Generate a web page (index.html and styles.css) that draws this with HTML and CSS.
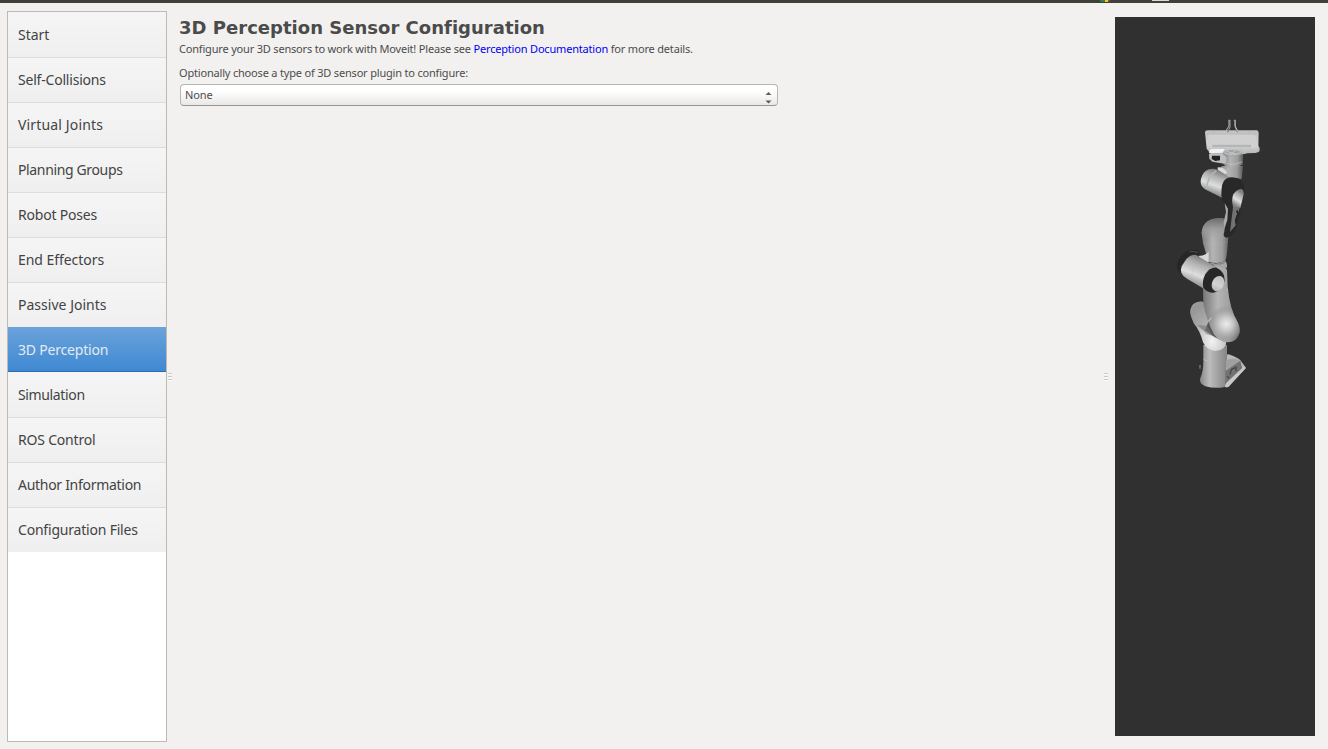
FILE: index.html
```html
<!DOCTYPE html>
<html lang="en">
<head>
<meta charset="utf-8">
<title>3D Perception Sensor Configuration</title>
<link rel="stylesheet" href="styles.css">
</head>
<body>
<div class="topbar"><i class="browser-icon"></i><i class="window-icon"></i></div>
<div class="window">
  <nav class="sidebar">
    <div class="item"><span>Start</span></div>
    <div class="item snug"><span>Self-Collisions</span></div>
    <div class="item wide"><span>Virtual Joints</span></div>
    <div class="item tight"><span>Planning Groups</span></div>
    <div class="item snug"><span>Robot Poses</span></div>
    <div class="item"><span>End Effectors</span></div>
    <div class="item roomy"><span>Passive Joints</span></div>
    <div class="item active snug"><span>3D Perception</span></div>
    <div class="item tight"><span>Simulation</span></div>
    <div class="item snug"><span>ROS Control</span></div>
    <div class="item tighter"><span>Author Information</span></div>
    <div class="item snug"><span>Configuration Files</span></div>
  </nav>
  <div class="splitter"><i></i><i></i><i></i></div>
  <main class="content">
    <h1>3D Perception Sensor Configuration</h1>
    <p class="intro">Configure your 3D sensors to work with Moveit! Please see <a>Perception Documentation</a> for more details.</p>
    <p class="prompt">Optionally choose a type of 3D sensor plugin to configure:</p>
    <div class="combo"><span>None</span>
      <svg width="7" height="13" viewBox="0 0 7 13"><path d="M0.5 4 3.5 1 6.5 4ZM.5 9.5 3.5 12.5 6.5 9.5Z" fill="#5c5c5c"/></svg>
    </div>
  </main>
  <div class="splitter right"><i></i><i></i><i></i></div>
  <aside class="viewport">
    <svg width="200" height="719" viewBox="0 0 200 719">
      <defs>
        <linearGradient id="tube"><stop offset="0" stop-color="#7c7c7c"/><stop offset=".4" stop-color="#b4b4b4"/><stop offset=".75" stop-color="#9c9c9c"/><stop offset="1" stop-color="#5c5c5c"/></linearGradient>
        <linearGradient id="base"><stop offset="0" stop-color="#858585"/><stop offset=".35" stop-color="#bcbcbc"/><stop offset="1" stop-color="#858585"/></linearGradient>
        <linearGradient id="shoulder" x1="0" y1="0" x2="0" y2="1"><stop offset="0" stop-color="#6a6a6a"/><stop offset=".5" stop-color="#9a9a9a" stop-opacity=".8"/><stop offset="1" stop-color="#a4a4a4" stop-opacity="0"/></linearGradient>
        <linearGradient id="barrel" x1=".65" y1=".1" x2=".35" y2=".9"><stop offset="0" stop-color="#808080"/><stop offset=".25" stop-color="#b0b0b0"/><stop offset=".6" stop-color="#dedede"/><stop offset="1" stop-color="#808080"/></linearGradient>
        <linearGradient id="hand" x1="0" y1="0" x2="0" y2="1"><stop offset="0" stop-color="#c0c0c0"/><stop offset=".6" stop-color="#d2d2d2"/><stop offset="1" stop-color="#b3b3b3"/></linearGradient>
        <linearGradient id="limb"><stop offset="0" stop-color="#777"/><stop offset=".4" stop-color="#b5b5b5"/><stop offset=".7" stop-color="#a2a2a2"/><stop offset="1" stop-color="#606060"/></linearGradient>
        <radialGradient id="elbow" gradientUnits="userSpaceOnUse" cx="184" cy="642" r="56"><stop offset="0" stop-color="#ededed"/><stop offset=".35" stop-color="#d0d0d0" stop-opacity=".9"/><stop offset=".75" stop-color="#a0a0a0" stop-opacity=".6"/><stop offset="1" stop-color="#888" stop-opacity="0"/></radialGradient>
        <radialGradient id="bowl" cx=".6" cy=".8" r=".75"><stop offset="0" stop-color="#f2f2f2"/><stop offset=".4" stop-color="#d0d0d0"/><stop offset="1" stop-color="#858585"/></radialGradient>
      </defs>
      <g transform="translate(50 93) scale(.33333)">
        <!-- base -->
        <path d="M184 737 Q187 731 195 734 Q220 743 226 751 L243 773 L191 830 Q185 834 179 831 L170 780Z" fill="#b9b9b9"/>
        <path d="M115 705 H186 V750 L179 831 Q151 837 121 829 Q103 821 105 807 Q115 785 115 757Z" fill="url(#base)"/>
        <path d="M182 752 Q205 740 227 753 Q216 760 185 780Z" fill="#a0a0a0"/>
        <path d="M181 783 226 752 232 776 180 825Z" fill="#727272"/>
        <path d="M184 818 236 770 242 775 190 830 180 830Z" fill="#c8c8c8"/>
        <path d="M195 794 200 778 213 772 213 784M187 799 193 805" fill="none" stroke="#484848" stroke-width="4"/>
        <path d="M105 765v11M115 746q6 7 12 6" stroke="#ccc" stroke-width="2" fill="none"/>
        <!-- lower joint -->
        <path d="M77 614 Q73 595 85 582 Q99 571 117 576 L136 642 L185 690 Q184 721 151 723 Q124 720 114 697 Q105 662 86 640Z" fill="url(#bowl)"/>
        <path d="M77 614 Q73 595 85 582 Q99 571 117 576 L132 628 L122 665 L103 654 Q80 635 77 614Z" fill="#a5a5a5" opacity=".65"/>
        <path d="M120 661 Q143 681 180 696 L142 652 135 623Z" fill="#555"/>
        <path d="M97 645 Q117 662 124 672 L144 678 126 647Z" fill="#777" opacity=".6"/>
        <!-- forearm -->
        <path id="forearm" d="M114 530 115 580 Q123 630 148 674 Q164 696 190 697 Q216 695 224 668 Q226 650 216 632 Q195 599 188 530 L186 480 Q172 455 148 465 L114 515Z" fill="url(#limb)"/>
        <path d="M114 530 115 580 Q123 630 148 674 Q164 696 190 697 Q216 695 224 668 Q226 650 216 632 Q195 599 188 530Z" fill="url(#elbow)"/>
        <path d="M130 635l9-12M185 540h3" stroke="#eee" stroke-width="2"/>
        <!-- upper arm -->
        <path d="M110 368 Q112 333 148 326 Q177 321 193 333 L189 391 Q186 442 181 452 Q161 465 130 455 L114 399Z" fill="url(#tube)"/>
        <path d="M110 367 Q113 333 148 326 Q177 321 193 333 L190 390 H112Z" fill="url(#shoulder)"/>
        <path d="M116 397q35 13 73-3" stroke="#d5d5d5" stroke-width="1" stroke-dasharray="2 5" fill="none"/>
        <path d="M100 438 Q121 437 131 425 L131 456 118 459Z" fill="#d8d8d8"/>
        <path d="M130 457q28 8 51-4 6 6 5 20l-30-3Z" fill="#a6a6a6"/>
        <path d="M147 461q18 4 32-3" fill="none" stroke="#666" stroke-width="2"/>
        <!-- elbow cylinder -->
        <path d="M47 489 Q31 478 38 457 Q51 423 81 420 Q100 419 104 430 L82 448Z" fill="#272727"/>
        <path d="M74 425q15-2 25 3" stroke="#666" stroke-width="2" fill="none"/>
        <path d="M64 447 Q75 434 92 434 L155 472 124 541 66 506 Q41 493 50 469Z" fill="url(#barrel)"/>
        <path d="M81 494q6-33 29-46" stroke="#aaa" stroke-width="1.5" stroke-dasharray="3 4" fill="none"/>
        <path d="M115 533 Q110 514 121 493 Q134 471 155 473 Q180 485 179 511 Q176 543 146 548 Q126 548 115 533Z" fill="#272727"/>
        <ellipse cx="159" cy="521" rx="18" ry="24" transform="rotate(24 159 521)" fill="url(#hand)"/>
        <!-- upper wrist -->
        <path d="M171 168 H234 L230 208 Q208 200 186 208L160 180Z" fill="url(#tube)"/>
        <path d="M158 172 Q176 170 187 188 L180 193 158 180Z" fill="#d9d9d9"/>
        <path d="M108 206 Q114 184 132 178 Q145 174 158 179 L198 205 Q174 220 171 263 L120 238 Q103 226 108 206Z" fill="url(#barrel)"/>
        <path d="M125 236q2-37 29-54" stroke="#aeb8b9" stroke-width="5" fill="none"/>
        <path d="M171 130H234V163Q215 177 181 169L171 157Z" fill="url(#tube)"/>
        <path d="M177 157q25 13 54-2" fill="none" stroke="#c5caca" stroke-width="2"/>
        <!-- dark wrist link -->
        <path d="M169 256 Q168 216 183 206 Q207 195 228 212 Q242 226 236 250 L227 300 214 350 Q207 380 184 383 Q172 380 178 365 L185 295 Q182 280 172 271Z" fill="#282828"/>
        <path d="M205 295 Q198 270 205 253 Q214 238 229 237 Q237 241 236 253 L226 295Z" fill="url(#barrel)"/>
        <path d="M179 280 189 296 187 330 178 357 176 336 183 306Z" fill="#aaa"/>
        <path d="M204 292 224 292 219 315 211 347 195 366Z" fill="#727272"/>
        <path d="M215 302q7 8 1 17q-5 10-3 21" stroke="#202020" stroke-width="5" fill="none"/>
        <!-- hand -->
        <path d="M271 105 Q286 107 284 119 Q285 128 270 128Z" fill="#bababa"/>
        <path d="M120 67 Q120 61 128 61 H275 Q280 61 281 68 L280 113 Q281 126 270 129 L247 130 Q230 136 218 129 H176 L170 134 H139 L125 116Z" fill="url(#hand)"/>
        <path d="M129 76 Q131 73 138 73 H266 Q274 76 274 85 V113 H137Z" fill="#d0d0d0"/>
        <path d="M141 104H258V112H142Z" fill="#b3b6b7"/>
        <path d="M125 72H276M145 63v7M254 63v7" stroke="#b0b3b3" stroke-width="2"/>
        <path d="M132 130 Q132 118 141 117 H179 L173 128Z" fill="#f1f1f1"/>
        <path d="M132 132H174L184 142V155L178 161 142 155 133 146Z" fill="#bcc0c0"/>
        <path d="M141 137H165V151L151 153 140 147Z" fill="#222"/>
        <ellipse cx="203" cy="129" rx="29" ry="9" fill="#a0a4a5"/>
        <path d="M178 128q24 13 51-1M185 124l29 9M192 134l20-12" stroke="#d2d5d5" stroke-width="2" fill="none"/>
        <path d="M190 31H195V51L188 67M206 31H211V51L218 67" fill="none" stroke="#7e8587" stroke-width="4"/>
        <path d="M192 48 181 65M210 48 219 65M192 31v17M210 31v17" fill="none" stroke="#b6bdbf" stroke-width="3"/>
      </g>
    </svg>
  </aside>
</div>
</body>
</html>
```
FILE: styles.css
```css
* { box-sizing: border-box; }
body { margin: 0; width: 1328px; height: 749px; overflow: hidden; background: #f2f1f0; color: #4c4c4c; font-family: "Noto Sans", sans-serif; }
.topbar { height: 3px; background: #403f3a; display: flex; padding-left: 1100px; }
.browser-icon { width: 10px; height: 2px; background: linear-gradient(90deg, #2b8247 0 45%, #f4c62c 45% 75%, #68622e 75%); border-radius: 0 0 5px 5px; }
.window-icon { width: 17px; height: 1px; margin-left: 42px; background: #dfdcd2; }
.window { height: 746px; display: flex; padding: 8px 13px 7px 7px; }
.sidebar { width: 160px; height: 731px; border: 1px solid #bdbab6; background: #fff; flex: none; }
.item { height: 45px; display: flex; align-items: center; padding: 0 0 1px 10px; font-size: 14px; letter-spacing: -.05px; color: #434343; white-space: nowrap; background: linear-gradient(#f5f5f5, #efefef); border-top: 1px solid #dcdcdc; }
.item.snug { letter-spacing: -.2px; }
.item.tight { letter-spacing: -.36px; }
.item.tighter { letter-spacing: -.29px; }
.item.roomy { letter-spacing: .02px; }
.item.wide { letter-spacing: .15px; }
.item:first-child { border-top-color: #f5f5f5; }
.item.active { color: #e4eaf0; background: linear-gradient(#6aa2db, #3f89d2); border-top-color: #6ba2da; border-bottom: 1px solid #2c6bad; padding-bottom: 0; }
.active + .item { border-top-color: #f5f5f5; }
.splitter { width: 6px; flex: none; display: flex; flex-direction: column; gap: 2px; padding: 362px 0 0 1px; }
.splitter i { width: 4px; height: 1px; background: #cbc9c7; box-shadow: 0 1px #fafafa; }
.splitter.right { width: 12px; }
.content { width: 930px; flex: none; padding: 6px 0 0 6px; }
h1 { margin: 0; height: 21px; font: bold 18px/21px "DejaVu Sans", sans-serif; letter-spacing: .02px; white-space: nowrap; color: #4b4b4b; }
p { margin: 0; font-size: 11px; line-height: 16px; letter-spacing: -.185px; white-space: nowrap; }
.intro { margin-top: 3px; }
.intro a { color: #0000f0; }
.prompt { margin-top: 8px; }
.combo { width: 598px; height: 22px; margin: 3px 0 0 1px; display: flex; justify-content: space-between; align-items: center; padding: 0 5px 0 4px; border: 1px solid #b8b6b3; border-bottom-color: #989693; border-radius: 4px; background: linear-gradient(#fff 30%, #e9e8e7); font-size: 11px; letter-spacing: -.1px; }
.combo span { padding-bottom: 2px; }
.combo svg { margin-top: 4px; }
.viewport { width: 200px; height: 719px; margin-top: 6px; background: #303030; flex: none; }
.viewport svg { display: block; }
```
